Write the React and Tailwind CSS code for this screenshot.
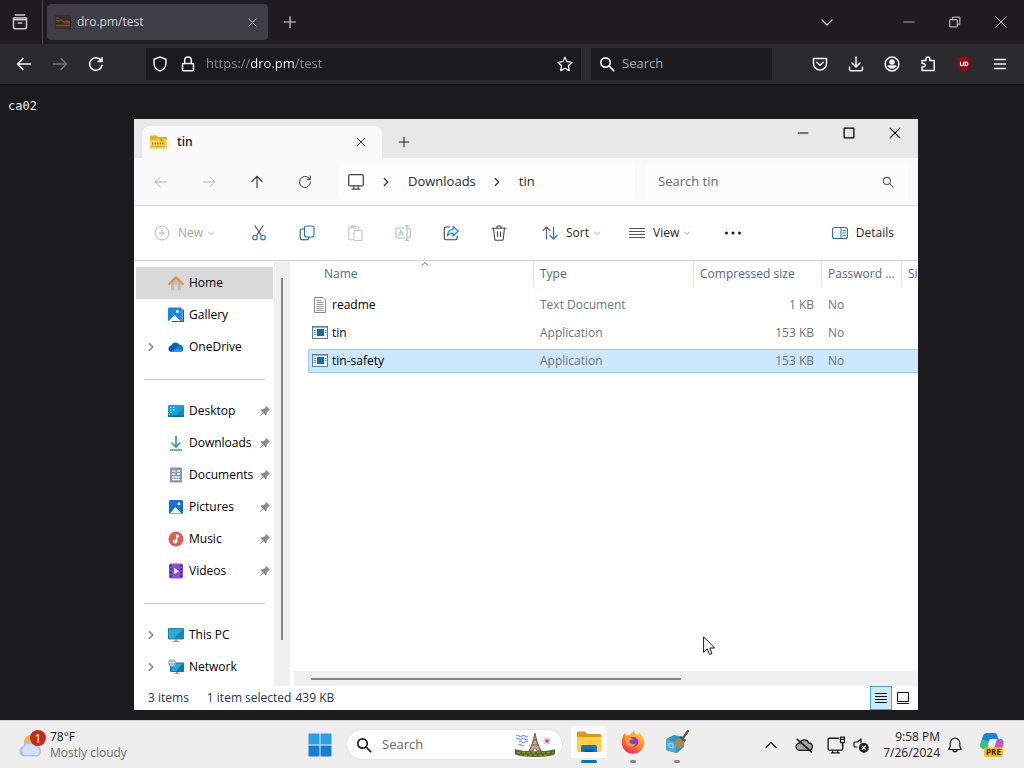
import React, { useState } from 'react';

function Icon({ size = 16, className = '', strokeWidth = 1, children }) {
  return (
    <svg
      width={size}
      height={size}
      viewBox="0 0 16 16"
      fill="none"
      stroke="currentColor"
      strokeWidth={strokeWidth}
      strokeLinecap="round"
      strokeLinejoin="round"
      className={`shrink-0 ${className}`}
      aria-hidden="true"
    >
      {children}
    </svg>
  );
}

const Close = (props) => <Icon {...props}><path d="M3.5 3.5l9 9M12.5 3.5l-9 9" /></Icon>;
const Plus = (props) => <Icon {...props}><path d="M8 2.5v11M2.5 8h11" /></Icon>;
const ArrowLeft = (props) => <Icon {...props}><path d="M14.5 8h-13M7 2.5L1.5 8 7 13.5" /></Icon>;
const ArrowRight = (props) => <Icon {...props}><path d="M1.5 8h13M9 2.5L14.5 8 9 13.5" /></Icon>;
const ChevronRight = (props) => <Icon {...props}><path d="M6 4l4 4-4 4" /></Icon>;
const ChevronDown = (props) => <Icon {...props}><path d="M3 6l5 5 5-5" /></Icon>;
const ChevronUp = (props) => <Icon {...props}><path d="M3 10.5l5-5 5 5" /></Icon>;
const SearchIcon = (props) => <Icon {...props}><circle cx="6.5" cy="6.5" r="4.7" /><path d="M10 10l4.7 4.7" /></Icon>;

/* Browser */

function BrowserTabs() {
  return (
    <div className="flex h-11 items-center bg-[#1e1c22] text-[#d4d4d9]">
      <div className="flex h-11 w-[43px] items-center justify-center border-r border-[#4a4950]">
        <button type="button" aria-label="Recent browsing">
          <Icon strokeWidth={1.5} className="mr-0.5 text-[#c9c9ce]">
            <path d="M3.5 1h9" />
            <path d="M1.5 4h13v1.8h-13zM1.5 5.8v7.4a1.5 1.5 0 0 0 1.5 1.5h10a1.5 1.5 0 0 0 1.5-1.5V5.8M6.2 9h3.6" />
          </Icon>
        </button>
      </div>
      <div className="ml-1 flex h-9 w-[221px] items-center rounded bg-[#3f3d48] px-2">
        <svg width="16" height="16" viewBox="0 0 16 16" aria-hidden="true">
          <rect y="1" width="16" height="14" rx="1" fill="#3b2b2b" />
          <path d="M1 6l3 1 2-1 3 2 2-1 4 1M1 11.5h14" stroke="#7a4d22" strokeWidth="1.3" fill="none" />
          <path d="M9 9h6M1 4h3" stroke="#8a6a2a" strokeWidth="0.8" />
        </svg>
        <span className="ml-1.5 flex-1 text-xs">dro.pm/test</span>
        <button type="button" aria-label="Close tab" className="mr-px"><Close size={13} /></button>
      </div>
      <button type="button" aria-label="New tab" className="ml-3.5"><Plus strokeWidth={1.2} /></button>
      <div className="ml-auto flex items-center">
        <button type="button" aria-label="List all tabs" className="mr-9 flex w-[46px] justify-center">
          <ChevronDown strokeWidth={1.3} />
        </button>
        <button type="button" aria-label="Minimize browser" className="flex w-[46px] justify-center">
          <Icon size={12}><path d="M1 8h14" /></Icon>
        </button>
        <button type="button" aria-label="Restore browser" className="flex w-[46px] justify-center">
          <Icon size={12} strokeWidth={1.3}><path d="M1.5 5h9.5v9.5H1.5zM5 5V1.5h9.5V11H11" /></Icon>
        </button>
        <button type="button" aria-label="Close browser" className="flex w-[46px] justify-center">
          <Icon size={12} strokeWidth={1.2}><path d="M1 1l14 14M15 1L1 15" /></Icon>
        </button>
      </div>
    </div>
  );
}

const browserTools = [
  {
    label: 'Pocket',
    icon: <path d="M1.5 2.5h13v5a6.5 6.5 0 0 1-13 0zM4.8 6.3L8 9.3l3.2-3" />,
  },
  {
    label: 'Downloads',
    icon: <path d="M8 1v9.5M4 7l4 4 4-4M1.5 11v2.2a1.5 1.5 0 0 0 1.5 1.5h10a1.5 1.5 0 0 0 1.5-1.5V11" />,
  },
  {
    label: 'Account',
    icon: (
      <>
        <circle cx="8" cy="8" r="6.9" />
        <circle cx="8" cy="5.9" r="2" fill="currentColor" />
        <path d="M4.3 10h7.4a4.4 4.4 0 0 1-7.4 0z" fill="currentColor" />
      </>
    ),
  },
  {
    label: 'Extensions',
    icon: <path d="M2 14.5V11h1.5a1.7 1.7 0 0 0 0-3.4H2V4.500h4V3a1.900 1.900 0 0 1 3.800 0v1.500h4.400v10z" />,
  },
];

function BrowserToolbar() {
  const [url, setUrl] = useState('https://dro.pm/test');
  const [query, setQuery] = useState('');

  return (
    <div className="flex h-[41px] items-center border-b border-[#0f0f12] bg-[#2b2a2f] text-[#f4f4f7]">
      <div className="ml-1.5 flex">
        <button type="button" aria-label="Back" className="flex w-9 justify-center"><ArrowLeft strokeWidth={1.5} /></button>
        <button type="button" aria-label="Forward" className="flex w-9 justify-center text-[#77767c]"><ArrowRight strokeWidth={1.3} /></button>
        <button type="button" aria-label="Reload" className="flex w-9 justify-center">
          <Icon strokeWidth={1.6}>
            <path d="M14 9.5A6.3 6.3 0 1 1 12.3 3.5L14 5" />
            <path d="M14.3 1.5v4.3H10z" fill="currentColor" strokeWidth="0.8" />
          </Icon>
        </button>
      </div>
      <div className="ml-8 flex h-8 flex-1 items-center bg-[#1b1a1f] px-1.5">
        <Icon strokeWidth={1.5}><path d="M8 1l6 2.2v4C14 11 11 14 8 15 5 14 2 11 2 7.2v-4z" /></Icon>
        <Icon strokeWidth={1.5} className="ml-3">
          <rect x="2.5" y="7.5" width="11" height="7.3" rx="1.3" />
          <path d="M4.7 7.5V4.3a3.3 3.3 0 0 1 6.6 0v3.2" />
        </Icon>
        <input
          type="text"
          aria-label="Address"
          value={url}
          onChange={(e) => setUrl(e.target.value)}
          className="ml-2.5 min-w-0 flex-1 bg-[linear-gradient(to_right,#8d8c94_45px,#fbfbfe_45px,#fbfbfe_89px,#8d8c94_89px)] bg-clip-text text-[13px] text-transparent outline-none"
        />
        <button type="button" aria-label="Bookmark this page" className="mr-0.5">
          <Icon strokeWidth={1.3}>
            <path d="M8 1.2l2.1 4.5 4.9.6-3.6 3.4.9 4.9L8 12.2l-4.3 2.4.9-4.9L1 6.3l4.9-.6z" />
          </Icon>
        </button>
      </div>
      <div className="ml-2.5 flex h-8 w-[181px] items-center bg-[#1b1a1f] px-2">
        <SearchIcon strokeWidth={1.7} />
        <input
          type="text"
          aria-label="Search the web"
          placeholder="Search"
          value={query}
          onChange={(e) => setQuery(e.target.value)}
          className="ml-[7px] min-w-0 flex-1 text-[13px] outline-none placeholder:text-[#a9a8ae]"
        />
      </div>
      <div className="mr-1.5 ml-[30px] flex">
        {browserTools.map((tool) => (
          <button key={tool.label} type="button" aria-label={tool.label} className="flex w-9 justify-center">
            <Icon strokeWidth={1.5}>{tool.icon}</Icon>
          </button>
        ))}
        <button type="button" aria-label="Ad blocker" className="flex w-9 justify-center">
          <svg width="16" height="16" viewBox="0 0 16 16" fill="none" aria-hidden="true">
            <path d="M8 0l6.5 2.5v5C14.5 12 11.5 14.5 8 16c-3.5-1.5-6.5-4-6.5-8.5v-5z" fill="#8e0c14" />
            <path d="M4.5 5.8v2.4a1.5 1.5 0 0 0 3 0V5.8M9 9.6h1a1.7 1.7 0 0 0 0-3.6H9z" stroke="#fff" strokeWidth="1.1" />
          </svg>
        </button>
        <button type="button" aria-label="Menu" className="flex w-9 justify-center">
          <Icon strokeWidth={1.5}><path d="M2.5 3.5h11M2.5 8h11M2.5 12.5h11" /></Icon>
        </button>
      </div>
    </div>
  );
}

/* Explorer icons */

function ZipFolder() {
  return (
    <svg width="17" height="16" viewBox="0 0 17 16" aria-hidden="true">
      <path d="M0 2.500a1 1 0 0 1 1-1h5.500L8 3h8a1 1 0 0 1 1 1V13.500a1 1 0 0 1-1 1H1a1 1 0 0 1-1-1z" fill="#e0b416" />
      <path d="M0 6.500l8-1h9v8a1 1 0 0 1-1 1H1a1 1 0 0 1-1-1z" fill="#f6d95c" />
      <path d="M2 9.500h13" stroke="#8d8051" strokeWidth="2" strokeDasharray="1.500 1" />
      <path d="M1 12.500h14" stroke="#c9a227" />
      <path d="M11 4v3h3" stroke="#b98b10" fill="none" />
    </svg>
  );
}

function HomeIcon() {
  return (
    <svg width="16" height="16" viewBox="0 0 16 16" aria-hidden="true">
      <path d="M3 7l5-4.5L13 7v7.500a.8.8 0 0 1-.8.8H9.800V10H6.200v5.300H3.800a.8.8 0 0 1-.8-.8z" fill="#bdbdbf" />
      <path d="M1.200 9L8 2.200 14.800 9" fill="none" stroke="#e0914a" strokeWidth="2.200" strokeLinecap="round" strokeLinejoin="round" />
    </svg>
  );
}

function GalleryIcon() {
  return (
    <svg width="16" height="16" viewBox="0 0 16 16" aria-hidden="true">
      <path d="M3 2h11.5A1.5 1.5 0 0 1 16 3.500V15H4z" fill="#0d5fb0" />
      <path d="M14 1v13" stroke="#fff" strokeWidth="0.8" />
      <rect y="0.5" width="13.5" height="13.5" rx="1" fill="#1c86dc" />
      <path d="M1 14l5.500-6 6 6z" fill="#fff" />
      <circle cx="9.5" cy="4.5" r="1.5" fill="#fff" />
    </svg>
  );
}

function OneDriveIcon() {
  return (
    <svg width="16" height="16" viewBox="0 0 16 16" aria-hidden="true">
      <path d="M3.500 13a3.300 3.300 0 0 1-.4-6.500A4.800 4.800 0 0 1 11.800 6 3.600 3.600 0 0 1 12.500 13z" fill="#0f5fb8" />
      <path d="M3.500 13l5.500-5.200c1-.9 2.500-1.500 3.800-1.200A3.300 3.300 0 0 1 12.500 13z" fill="#1278d4" />
      <path d="M3 13l7-3.300 5 2a3 3 0 0 1-2.500 1.300z" fill="#2a9cec" />
    </svg>
  );
}

function DesktopIcon() {
  return (
    <svg width="16" height="16" viewBox="0 0 16 16" aria-hidden="true">
      <rect y="2" width="16" height="12" rx="1" fill="#1fa0cf" />
      <path d="M6 14L16 4v9a1 1 0 0 1-1 1z" fill="#1588bd" />
      <path d="M2 4.500h1.500M2 7h1.500M2 9.500h1.500M5 4.500h1.500M5 7h1.500" stroke="#c9f1fb" strokeWidth="1.2" />
      <path d="M0 12.500h16V13a1 1 0 0 1-1 1H1a1 1 0 0 1-1-1z" fill="#0d6694" />
    </svg>
  );
}

function DownloadsIcon() {
  return (
    <svg width="16" height="16" viewBox="0 0 16 16" fill="none" stroke="#24a888" strokeWidth="1.7" aria-hidden="true">
      <path d="M8 1v10.500M3.500 7.500L8 12l4.500-4.500M2 15h12" />
    </svg>
  );
}

function DocumentsIcon() {
  return (
    <svg width="16" height="16" viewBox="0 0 16 16" aria-hidden="true">
      <rect x="2" y="0.5" width="12" height="15" rx="1" fill="#8796a8" />
      <path d="M4 4h3.500M4 7h3.500M4 10h8M4 12.500h8M9 4h3M9 7h3" stroke="#f0f4f8" strokeWidth="1.3" />
    </svg>
  );
}

function PicturesIcon() {
  return (
    <svg width="16" height="16" viewBox="0 0 16 16" aria-hidden="true">
      <rect x="1" y="1" width="14" height="14" rx="1.2" fill="#1672c4" />
      <path d="M2 14.500L7.500 8l6 6.500z" fill="#eaf5ff" />
      <circle cx="11" cy="5" r="1.4" fill="#fff" />
    </svg>
  );
}

function MusicIcon() {
  return (
    <svg width="16" height="16" viewBox="0 0 16 16" aria-hidden="true">
      <circle cx="8" cy="8" r="7.5" fill="#d4635c" />
      <path d="M8.800 3.500V10" stroke="#fff" strokeWidth="1.3" />
      <path d="M8.200 3.500l3 1v2l-3-1z" fill="#fff" />
      <circle cx="7.300" cy="10.500" r="2" fill="#fff" />
    </svg>
  );
}

function VideosIcon() {
  return (
    <svg width="16" height="16" viewBox="0 0 16 16" aria-hidden="true">
      <rect x="1" y="0.5" width="14" height="15" rx="1.5" fill="#8a50d4" />
      <path d="M2.800 2v12M13.200 2v12" stroke="#40207d" strokeWidth="1.7" strokeDasharray="1.8 1.6" />
      <path d="M6 5l5 3-5 3z" fill="#fff" />
    </svg>
  );
}

function ThisPcIcon() {
  return (
    <svg width="16" height="16" viewBox="0 0 16 16" aria-hidden="true">
      <rect y="1" width="16" height="11.5" rx="1" fill="#1c84b4" />
      <path d="M1 2h14L6 11.500H1z" fill="#2fabd8" />
      <path d="M7 12.500h2V14h2.500v1h-7v-1H7z" fill="#8d99a5" />
    </svg>
  );
}

function NetworkIcon() {
  return (
    <svg width="16" height="16" viewBox="0 0 16 16" aria-hidden="true">
      <rect x="2" y="3.5" width="14" height="9.5" rx="0.8" fill="#137aa8" />
      <path d="M7 4.500h8L8 12H3z" fill="#2ca8d4" />
      <circle cx="4" cy="4" r="3.8" fill="#8fa9b8" />
      <path d="M.8 3.500h6.400M4 .5c-2 2-2 5 0 7M4 .5c2 2 2 5 0 7" stroke="#e6f3f8" strokeWidth="0.8" fill="none" />
      <path d="M8 13h2v1.200h2v.8H6v-.8h2z" fill="#8d99a5" />
    </svg>
  );
}

function PinIcon() {
  return (
    <svg width="12" height="12" viewBox="0 0 12 12" className="ml-auto shrink-0" aria-hidden="true">
      <path d="M7 .8L11.200 5l-1.500.4-1.700 1.800-.3 2.500-1 .8L4.500 8.200 1.200 11.300l-.6-.6L3.800 7.500 1.500 5.200l.9-1 2.500-.2L6.600 2.300z" fill="#8c8c8c" />
    </svg>
  );
}

function TextFileIcon() {
  return (
    <svg width="16" height="16" viewBox="0 0 16 16" fill="none" aria-hidden="true">
      <path d="M2.500.5h8.500L13.500 3v12.500h-11z" fill="#fafafa" stroke="#8a8a8a" />
      <path d="M4.500 3.500h5M4.500 5.500h7M4.500 7.500h7M4.500 9.500h7M4.500 11.500h7M4.500 13.500h7" stroke="#999" />
    </svg>
  );
}

function AppFileIcon() {
  return (
    <svg width="16" height="16" viewBox="0 0 16 16" fill="none" aria-hidden="true">
      <rect x="0.5" y="1.5" width="15" height="12" fill="#f2f7fb" stroke="#5f7f99" />
      <path d="M1 2.500h14" stroke="#8fb3cc" />
      <rect x="5" y="4" width="7" height="7" fill="#1769a8" />
      <path d="M2 5.500h2M2 7.500h2M2 9.500h2M13 5.500h1.500M13 7.500h1.500" stroke="#4b9cd0" />
    </svg>
  );
}

/* Explorer */

function ExplorerTitleBar() {
  return (
    <div className="flex h-[39px] shrink-0 items-end bg-[#e8e8e8]">
      <div className="ml-2 flex h-8 w-60 items-center rounded-t-lg bg-[#f9f9f9] px-2 text-[#1b1b1b]">
        <ZipFolder />
        <span className="ml-2.5 flex-1 text-xs font-semibold">tin</span>
        <button type="button" aria-label="Close explorer tab" className="mr-1.5"><Close size={14} /></button>
      </div>
      <button type="button" aria-label="New explorer tab" className="flex h-8 w-11 items-center justify-center">
        <Plus size={14} />
      </button>
      <div className="ml-auto flex self-start pt-0.5">
        <button type="button" aria-label="Minimize" className="flex h-6 w-[46px] items-center justify-center">
          <Icon size={12} strokeWidth={1.4}><path d="M1.5 8h13" /></Icon>
        </button>
        <button type="button" aria-label="Maximize" className="flex h-6 w-[46px] items-center justify-center">
          <Icon size={12} strokeWidth={1.7}><rect x="1.5" y="1.5" width="13" height="13" rx="0.5" /></Icon>
        </button>
        <button type="button" aria-label="Close" className="flex h-6 w-[46px] items-center justify-center">
          <Icon size={12} strokeWidth={1.4}><path d="M1.5 1.5l13 13M14.5 1.5l-13 13" /></Icon>
        </button>
      </div>
    </div>
  );
}

function ExplorerNav() {
  return (
    <div className="flex h-12 shrink-0 items-center border-b border-[#dcdcdc] bg-[#f9f9f9] pr-2.5 pl-[3px] text-[#2a2a2a]">
      <button type="button" aria-label="Back in folder" className="flex w-12 justify-center text-[#a9a9a9]"><ArrowLeft size={14} /></button>
      <button type="button" aria-label="Forward in folder" className="flex w-12 justify-center text-[#a9a9a9]"><ArrowRight size={14} /></button>
      <button type="button" aria-label="Up" className="flex w-12 justify-center">
        <Icon size={14} strokeWidth={1.2}><path d="M8 14.5v-13M2 7.500l6-6 6 6" /></Icon>
      </button>
      <button type="button" aria-label="Refresh" className="flex w-12 justify-center">
        <Icon size={14} strokeWidth={1.1}><path d="M14.3 8A6.300 6.300 0 1 1 12.500 3.600l1.300 1.200M14 1.300v3.700h-3.700" /></Icon>
      </button>
      <div className="ml-2.5 flex h-9 flex-1 items-center rounded bg-[#fdfdfd] px-2 text-[13px]">
        <button type="button" aria-label="This PC location">
          <Icon size={18} strokeWidth={1.1} className="text-[#444]">
            <rect x="1.5" y="1.5" width="13" height="10" rx="1.3" />
            <path d="M6 11.500v2.500M10 11.500v2.500M4.500 14.300h7" />
          </Icon>
        </button>
        <ChevronRight size={14} strokeWidth={1.3} className="ml-3.5" />
        <button type="button" className="ml-[15px]">Downloads</button>
        <ChevronRight size={14} strokeWidth={1.3} className="ml-3.5" />
        <button type="button" className="ml-[15px]">tin</button>
      </div>
      <div className="ml-2.5 flex h-9 w-[263px] items-center rounded bg-[#fcfcfc] pr-3 pl-[13px]">
        <input
          type="text"
          aria-label="Search tin"
          placeholder="Search tin"
          className="min-w-0 flex-1 text-[13px] outline-none placeholder:text-[#666]"
        />
        <SearchIcon size={12} strokeWidth={1.4} className="mr-0.5 text-[#555]" />
      </div>
    </div>
  );
}

const fileActions = [
  {
    label: 'Cut',
    icon: (
      <>
        <path d="M4 .8l6.300 9.700M12 .8L5.700 10.500" stroke="#444" />
        <circle cx="4" cy="12.500" r="2.300" stroke="#1b75c4" />
        <circle cx="12" cy="12.500" r="2.300" stroke="#1b75c4" />
      </>
    ),
  },
  {
    label: 'Copy',
    icon: (
      <>
        <rect x="5.500" y="1" width="9.500" height="11" rx="2" stroke="#1b75c4" />
        <path d="M5.300 4H3a1.800 1.800 0 0 0-1.800 1.800v6.700A2.300 2.300 0 0 0 3.500 14.800h4.300A2 2 0 0 0 9.800 12.500" stroke="#1f5a8a" />
      </>
    ),
  },
  {
    label: 'Paste',
    icon: (
      <>
        <path d="M6 14.800H3a1.200 1.200 0 0 1-1.200-1.200V3A1.200 1.200 0 0 1 3 1.800h7.500A1.200 1.200 0 0 1 11.700 3v1.500M4.500 1h4v2h-4z" stroke="#c4c4c4" />
        <rect x="7" y="5.500" width="8" height="10" rx="1.300" stroke="#b4c6d6" />
      </>
    ),
  },
  {
    label: 'Rename',
    icon: (
      <>
        <path d="M9.500 3H3a2 2 0 0 0-2 2v6a2 2 0 0 0 2 2h6.500M3.800 10.500L6 5.200l2.200 5.300M4.500 9h3" stroke="#a5c0d8" />
        <path d="M12 1v14M10.500.8h3M10.500 15.200h3M13.700 3A1.700 1.700 0 0 1 15.300 5v6a1.700 1.700 0 0 1-1.600 2" stroke="#b4b4b4" />
      </>
    ),
  },
  {
    label: 'Share',
    icon: (
      <>
        <path d="M6.500 2H3a1.700 1.700 0 0 0-1.700 1.700v9.300A1.700 1.700 0 0 0 3 14.700h9.500a1.700 1.700 0 0 0 1.700-1.700v-2" stroke="#444" />
        <path d="M10 1.500l5.300 4.700L10 11V8.300c-2.500-.2-4.300.7-5.600 2.700.2-3.500 2-6.300 5.600-6.700z" stroke="#1b75c4" fill="#e4f1fc" />
      </>
    ),
  },
  {
    label: 'Delete',
    icon: <path d="M1 3.200h14M2.500 3.200l1.300 11a1 1 0 0 0 1 1h6.400a1 1 0 0 0 1-1l1.300-11M5.800 3a2.200 2.200 0 0 1 4.400 0M6.500 6.800v4.700M9.500 6.800v4.700" stroke="#444" />,
  },
];

function ExplorerToolbar() {
  return (
    <div className="flex h-[55px] shrink-0 items-center border-b border-[#cfcfcf] bg-white pr-6 pl-5 text-xs text-[#1f1f1f]">
      <button type="button" className="flex w-[81px] items-center text-[#a3a3a3]">
        <Icon className="text-[#b8b8b8]"><circle cx="8" cy="8" r="7" /><path d="M8 5v6M5 8h6" /></Icon>
        <span className="ml-2">New</span>
        <ChevronDown size={8} strokeWidth={2} className="ml-1" />
      </button>
      {fileActions.map((action) => (
        <button key={action.label} type="button" aria-label={action.label} className="flex w-12 justify-center">
          <Icon strokeWidth={1.1}>{action.icon}</Icon>
        </button>
      ))}
      <button type="button" className="ml-[19px] flex w-[87px] items-center">
        <Icon strokeWidth={1.2}>
          <path d="M4.500 14V2M1 5.500L4.500 2 8 5.500" stroke="#666" />
          <path d="M11.500 2v12M8 10.500l3.500 3.500 3.500-3.500" stroke="#1b75c4" />
        </Icon>
        <span className="ml-2">Sort</span>
        <ChevronDown size={8} strokeWidth={2} className="ml-1 text-[#a3a3a3]" />
      </button>
      <button type="button" className="flex w-[92px] items-center">
        <svg width="16" height="16" viewBox="0 0 16 16" stroke="#555" aria-hidden="true">
          <path d="M0 3.500h16M0 6.500h16M0 9.500h16M0 12.500h16" />
        </svg>
        <span className="ml-2">View</span>
        <ChevronDown size={8} strokeWidth={2} className="ml-1 text-[#a3a3a3]" />
      </button>
      <button type="button" aria-label="See more" className="flex w-6 justify-center">
        <svg width="18" height="4" viewBox="0 0 18 4" fill="#1b1b1b" aria-hidden="true">
          <circle cx="2.500" cy="2" r="1.500" /><circle cx="9" cy="2" r="1.500" /><circle cx="15.500" cy="2" r="1.500" />
        </svg>
      </button>
      <button type="button" className="ml-auto flex items-center">
        <Icon strokeWidth={1.1} className="text-[#2a6f90]">
          <rect x="0.6" y="2.5" width="14.8" height="11" rx="2" />
          <path d="M9 2.500v11M11 5.500h2.500M11 8h2.500M11 10.500h2.500" stroke="#1a86c8" />
        </Icon>
        <span className="ml-2">Details</span>
      </button>
    </div>
  );
}

const places = [
  [
    { name: 'Home', icon: <HomeIcon />, active: true },
    { name: 'Gallery', icon: <GalleryIcon /> },
    { name: 'OneDrive', icon: <OneDriveIcon />, expandable: true },
  ],
  [
    { name: 'Desktop', icon: <DesktopIcon />, pinned: true },
    { name: 'Downloads', icon: <DownloadsIcon />, pinned: true },
    { name: 'Documents', icon: <DocumentsIcon />, pinned: true },
    { name: 'Pictures', icon: <PicturesIcon />, pinned: true },
    { name: 'Music', icon: <MusicIcon />, pinned: true },
    { name: 'Videos', icon: <VideosIcon />, pinned: true },
  ],
  [
    { name: 'This PC', icon: <ThisPcIcon />, expandable: true },
    { name: 'Network', icon: <NetworkIcon />, expandable: true },
  ],
];

function Sidebar() {
  return (
    <div className="flex w-[156px] shrink-0">
      <nav aria-label="Folders" className="mr-px flex-1 overflow-hidden pt-1.5 pl-0.5 text-xs text-black">
        {places.map((group, index) => (
          <React.Fragment key={index}>
            {index > 0 && <hr className="mx-2 mt-4 mb-3.5 h-0.5 border-t border-[#c6c6c6]" />}
            {group.map((place) => (
              <a
                key={place.name}
                href="#"
                className={`flex h-8 items-center pr-0.5 pl-2 ${place.active ? 'bg-[#d9d9d9]' : ''}`}
              >
                <span className="flex w-6 shrink-0 text-[#777]">
                  {place.expandable && <ChevronRight size={14} strokeWidth={1.5} />}
                </span>
                {place.icon}
                <span className="ml-[5px]">{place.name}</span>
                {place.pinned && <PinIcon />}
              </a>
            ))}
          </React.Fragment>
        ))}
      </nav>
      <div className="flex w-4 justify-center bg-[#f0f0f0] pt-[17px] pb-[46px]">
        <div className="w-0.5 bg-[#858585]" />
      </div>
    </div>
  );
}

const files = [
  { name: 'readme', type: 'Text Document', size: '1 KB', icon: <TextFileIcon /> },
  { name: 'tin', type: 'Application', size: '153 KB', icon: <AppFileIcon /> },
  { name: 'tin-safety', type: 'Application', size: '153 KB', icon: <AppFileIcon />, selected: true },
];

function FileTable() {
  return (
    <div className="flex-1 overflow-hidden pl-[18px]">
      <table className="w-[720px] table-fixed text-left text-xs">
        <thead className="text-[#53657d]">
          <tr className="h-[30px] align-top">
            <th scope="col" className="w-[226px] font-normal">
              <div className="relative flex h-[26px] items-center border-r border-[#e5e5e5] pl-4">
                Name
                <ChevronUp size={10} strokeWidth={1.5} className="absolute -top-0.5 left-28 text-[#555]" />
              </div>
            </th>
            <th scope="col" className="w-40 font-normal">
              <div className="flex h-[26px] items-center border-r border-[#e5e5e5] pl-1.5">Type</div>
            </th>
            <th scope="col" className="w-32 font-normal">
              <div className="flex h-[26px] items-center border-r border-[#e5e5e5] pl-1.5">Compressed size</div>
            </th>
            <th scope="col" className="w-20 font-normal">
              <div className="flex h-[26px] items-center border-r border-[#e5e5e5] pl-1.5">Password ...</div>
            </th>
            <th scope="col" className="font-normal">
              <div className="flex h-[26px] items-center pl-1.5">Size</div>
            </th>
          </tr>
        </thead>
        <tbody className="text-[#737373]">
          {files.map((file) => {
            const cell = file.selected
              ? 'flex h-6 items-center border-y border-[#99c9ef] bg-[#cce8ff]'
              : 'flex h-6 items-center border-y border-transparent';
            return (
              <tr key={file.name} className="h-7">
                <td>
                  <div className={`${cell} text-black ${file.selected ? 'rounded-l-xs border-l pl-[3px]' : 'pl-1'}`}>
                    {file.icon}
                    <span className="ml-1">{file.name}</span>
                  </div>
                </td>
                <td><div className={`${cell} pl-1.5`}>{file.type}</div></td>
                <td><div className={`${cell} justify-end pr-2`}>{file.size}</div></td>
                <td><div className={`${cell} pl-1.5`}>No</div></td>
                <td><div className={cell} /></td>
              </tr>
            );
          })}
        </tbody>
      </table>
    </div>
  );
}

function ExplorerWindow() {
  return (
    <section
      aria-label="tin folder"
      className="absolute top-[34px] right-[106px] bottom-2.5 left-[134px] flex flex-col overflow-hidden bg-white"
    >
      <ExplorerTitleBar />
      <ExplorerNav />
      <ExplorerToolbar />
      <div className="flex min-h-0 flex-1">
        <Sidebar />
        <div className="flex min-w-0 flex-1 flex-col">
          <FileTable />
          <div className="ml-1 flex h-[15px] shrink-0 items-center bg-[#f0f0f0] pl-[17px]">
            <div className="h-0.5 w-[61%] bg-[#858585]" />
          </div>
        </div>
      </div>
      <div className="flex h-6 shrink-0 items-center bg-white pl-3.5 text-xs text-[#26324a]">
        <span>3 items</span>
        <span className="ml-[18px]">1 item selected</span>
        <span className="ml-1">439 KB</span>
        <div className="ml-auto flex h-6 pr-1">
          <button type="button" aria-label="Details view" className="flex w-[22px] items-center justify-center border border-[#4ba3d3] bg-[#cdeafa]">
            <svg width="12" height="12" viewBox="0 0 12 12" stroke="#111" aria-hidden="true">
              <path d="M0 1.500h12M0 4.500h12M0 7.500h12M0 10.500h12" />
            </svg>
          </button>
          <button type="button" aria-label="Thumbnail view" className="flex w-[22px] items-center justify-center">
            <svg width="12" height="12" viewBox="0 0 12 12" fill="none" stroke="#111" aria-hidden="true">
              <path d="M.5.5h11v9H.5zM0 11.500h12" />
            </svg>
          </button>
        </div>
      </div>
    </section>
  );
}

function Cursor() {
  return (
    <svg width="13" height="20" viewBox="0 0 13 20" className="absolute top-[551px] left-[703px]" aria-hidden="true">
      <path d="M.6.8v15.500l3.600-3.400 2.300 5.600 2.500-1-2.300-5.500h5z" fill="#fff" stroke="#111" strokeWidth="1" />
    </svg>
  );
}

/* Taskbar */

function WeatherIcon() {
  return (
    <svg width="30" height="30" viewBox="0 0 30 30" aria-hidden="true">
      <circle cx="14" cy="12" r="7" fill="#f5b048" />
      <path d="M7 26.500a5.300 5.300 0 0 1-.8-10.300 7 7 0 0 1 13-.5 5.600 5.600 0 0 1 1 10.800z" fill="#a9c4ea" />
      <path d="M8 25a4 4 0 0 1-1-7.300 6 6 0 0 1 11-.7 4.200 4.200 0 0 1 2 8z" fill="#d3e2f6" />
      <circle cx="21" cy="5.500" r="0" />
      <circle cx="21" cy="8" r="8" fill="#c42b1c" />
      <text x="21" y="12.500" textAnchor="middle" fontSize="12" fill="#fff">1</text>
    </svg>
  );
}

function ParisArt() {
  return (
    <svg width="42" height="26" viewBox="0 0 42 26" fill="none" aria-hidden="true">
      <path d="M2 4q1.500-1.500 3 0t3 0 3 0 3 0M2 7q1.500-1.500 3 0t3 0 3 0 3 0M5 10q1.500-1.500 3 0t3 0 3 0M4 13q1.500-1.500 3 0t3 0" stroke="#7c9be8" strokeWidth="1.1" />
      <path d="M1 17c6 3 34 3 40 0v5c-4 4-36 4-40 0z" fill="#4d6b2c" />
      <path d="M3 20.500h36M5 23.500h32" stroke="#a58a3c" strokeWidth="1.5" strokeDasharray="3 2" />
      <path d="M21 1l-1.500 7-2 6-2.500 5h3.500q2.500-5 5 0h3.500l-2.500-5-2-6z" fill="#c9a99a" stroke="#7a574c" strokeWidth="1.1" />
      <path d="M19 8h4M17.500 13h7" stroke="#7a574c" strokeWidth="1.2" />
      <path d="M33 5v8M29 9h8M30 6l6 6M36 6l-6 6" stroke="#e8a8b4" strokeWidth="1" />
      <circle cx="33" cy="9" r="1.8" fill="#d64860" />
    </svg>
  );
}

function FolderApp() {
  return (
    <svg width="26" height="26" viewBox="0 0 26 26" aria-hidden="true">
      <path d="M1 4a1.500 1.500 0 0 1 1.500-1.500h6.500L11.500 5H24a1.200 1.200 0 0 1 1.200 1.200V22H1z" fill="#d99a1c" />
      <path d="M1 8h24.200v13.500A1.500 1.500 0 0 1 23.700 23H2.500A1.500 1.500 0 0 1 1 21.500z" fill="#ffcf48" />
      <path d="M5 23v-5.500A1.500 1.500 0 0 1 6.500 16h13a1.500 1.500 0 0 1 1.500 1.500V23z" fill="#1673c6" />
      <path d="M8.500 23v-2.500h9V23z" fill="#0d529a" />
    </svg>
  );
}

function FirefoxApp() {
  return (
    <svg width="24" height="24" viewBox="0 0 24 24" aria-hidden="true">
      <defs>
        <linearGradient id="fox" x1="0.8" y1="0" x2="0.2" y2="1">
          <stop offset="0" stopColor="#ffd83c" />
          <stop offset="0.45" stopColor="#ff8a28" />
          <stop offset="1" stopColor="#f0205e" />
        </linearGradient>
      </defs>
      <path d="M3.500 3l2 2.500 2.500-.3L13 .8l1.500 3 3 1.200.5-2.500c3.500 3 5.200 6.300 5.200 10A11.200 11.200 0 0 1 .8 12.500c0-3.500 1-6.500 2.700-9.500z" fill="url(#fox)" />
      <circle cx="12.300" cy="12" r="5" fill="#7b3fe0" />
      <path d="M4 8.500c3-1.500 6.500-1 9 1-2.500-.3-4.500.4-4.800 2 .5 2.700 4.500 3.500 6.500 1.700-.5 3.800-6.500 5.300-9 1.500z" fill="#ffa02c" />
    </svg>
  );
}

function CubeApp() {
  return (
    <svg width="24" height="24" viewBox="0 0 24 24" fill="none" aria-hidden="true">
      <path d="M1 9l8-4 10 2v10l-7 6-11-3z" fill="#3b94c0" />
      <path d="M1 9l10 3v11l-10-3z" fill="#4fa9d2" />
      <path d="M11 12l8-5M4 13l4 1v4l-4-1z" stroke="#a7dcf0" />
      <path d="M23 1l-5 7" stroke="#6b4a3a" strokeWidth="2.2" strokeLinecap="round" />
      <path d="M14 8l6 4-4 6c-3 0-5-1.500-6-5z" fill="#b98442" />
      <path d="M15 7l5.500 4" stroke="#4a5a60" strokeWidth="2.400" />
    </svg>
  );
}

function CopilotIcon() {
  return (
    <svg width="26" height="26" viewBox="0 0 26 26" aria-hidden="true">
      <path d="M8 1h7c2 0 3 1 3.500 3l1 3h-7c-2 0-2.500 1-3 3L8 16.500H5c-3 0-4-2-3.500-5L4 4c.6-2 2-3 4-3z" fill="#1b83d8" />
      <path d="M3 7.500l6.500 2L8 17H5c-3 0-4-2-3.500-4.500z" fill="#3bbf86" />
      <path d="M18 7h3c3 0 4 2 3.500 5l-2 6c-.6 2-2 3-4 3h-6c-2 0-3-1-3-3h3c2 0 2.500-1 3-3z" fill="#c257d0" />
      <rect x="5" y="15.500" width="19" height="9.500" rx="2" fill="#f4b731" />
      <text x="14.500" y="23" textAnchor="middle" fontSize="8" fontWeight="700" fill="#3a2a00">PRE</text>
    </svg>
  );
}

function TaskApp({ label, open, children }) {
  return (
    <button type="button" aria-label={label} className="flex h-12 w-11 flex-col items-center justify-end">
      <span className={`flex h-8 w-9 items-center justify-center rounded-t ${open ? 'bg-[#fafafa]' : ''}`}>{children}</span>
      <span className={`mt-0.5 mb-1.5 h-[3px] rounded-full ${open ? 'w-4 bg-[#1170b8]' : 'w-1.5 bg-[#878787]'}`} />
    </button>
  );
}

function Taskbar() {
  return (
    <footer className="flex h-12 shrink-0 items-center border-t border-[#d5d5d5] bg-[#eeeeee] text-[#1b1b1b]">
      <button type="button" className="flex w-[298px] items-center pl-[17px] text-left">
        <WeatherIcon />
        <span className="ml-[3px] flex flex-col text-xs leading-4">
          <span>78°F</span>
          <span className="text-[#6b6b6b]">Mostly cloudy</span>
        </span>
      </button>
      <button type="button" aria-label="Start" className="flex w-11 justify-center">
        <svg width="24" height="24" viewBox="0 0 24 24" aria-hidden="true">
          <path d="M.5.5h11v11H.5zM12.500.5h11v11h-11z" fill="#2aa0e4" />
          <path d="M.5 12.500h11v11H.5zM12.500 12.500h11v11h-11z" fill="#1580d2" />
        </svg>
      </button>
      <div className="ml-1 flex h-[31px] w-[217px] items-center rounded-full border border-[#e2e2e2] bg-white pr-1.5 pl-[9px]">
        <SearchIcon strokeWidth={1.7} />
        <input
          type="text"
          aria-label="Search Windows"
          placeholder="Search"
          className="ml-2.5 min-w-0 flex-1 text-[13px] outline-none placeholder:text-[#666]"
        />
        <ParisArt />
      </div>
      <div className="ml-1 flex">
        <TaskApp label="File Explorer" open><FolderApp /></TaskApp>
        <TaskApp label="Firefox"><FirefoxApp /></TaskApp>
        <TaskApp label="Cleaner"><CubeApp /></TaskApp>
      </div>
      <div className="ml-auto flex items-center pr-[19px]">
        <button type="button" aria-label="Hidden icons" className="mr-4"><ChevronUp strokeWidth={1.3} /></button>
        <Icon size={18} strokeWidth={1.2} className="mr-3.5">
          <path d="M4.500 12.800a3.300 3.300 0 0 1-.3-6.600 4.300 4.300 0 0 1 8 0 3.300 3.300 0 0 1 0 6.600z" fill="#a8a8a8" />
          <path d="M2 3l12.500 11" stroke="#222" strokeWidth="1.500" />
        </Icon>
        <Icon size={18} strokeWidth={1.2} className="mr-2">
          <path d="M10 2H2a1 1 0 0 0-1 1v8.500a1 1 0 0 0 1 1h11a1 1 0 0 0 1-1V8M5 12.500v2.500M9.500 12.500v2.500M4 15h7" />
          <path d="M12 1h3.500v4a1 1 0 0 1-1 1H13a1 1 0 0 1-1-1zM13.800 6v3M12 3h3" />
        </Icon>
        <Icon strokeWidth={1.2} className="mr-3.5">
          <path d="M8 2L4.500 5H2a1 1 0 0 0-1 1v3a1 1 0 0 0 1 1h2M8 2v4" />
          <circle cx="10.800" cy="10.800" r="4.300" fill="#222" />
          <path d="M9.200 9.200l3.200 3.200M12.400 9.200l-3.200 3.200" stroke="#fff" />
        </Icon>
        <span className="flex flex-col text-right text-xs leading-4">
          <span>9:58 PM</span>
          <span>7/26/2024</span>
        </span>
        <button type="button" aria-label="Notifications" className="mr-4 ml-[7px]">
          <Icon strokeWidth={1.2}>
            <path d="M8 1.200a4.800 4.800 0 0 0-4.800 4.800v3.200L1.800 12.500h12.400l-1.400-3.300V6A4.800 4.800 0 0 0 8 1.200zM6 12.700a2 2 0 0 0 4 0" />
          </Icon>
        </button>
        <button type="button" aria-label="Copilot"><CopilotIcon /></button>
      </div>
    </footer>
  );
}

function App() {
  return (
    <div className="flex min-h-screen flex-col bg-[#1b1a1f] font-['Open_Sans','Noto_Sans',sans-serif]">
      <BrowserTabs />
      <BrowserToolbar />
      <main className="relative min-h-[635px] flex-1">
        <pre className="px-2 pt-[13px] font-['DejaVu_Sans_Mono',monospace] text-xs text-[#f2f2f2]">ca02</pre>
        <ExplorerWindow />
        <Cursor />
      </main>
      <Taskbar />
    </div>
  );
}

export default App;
